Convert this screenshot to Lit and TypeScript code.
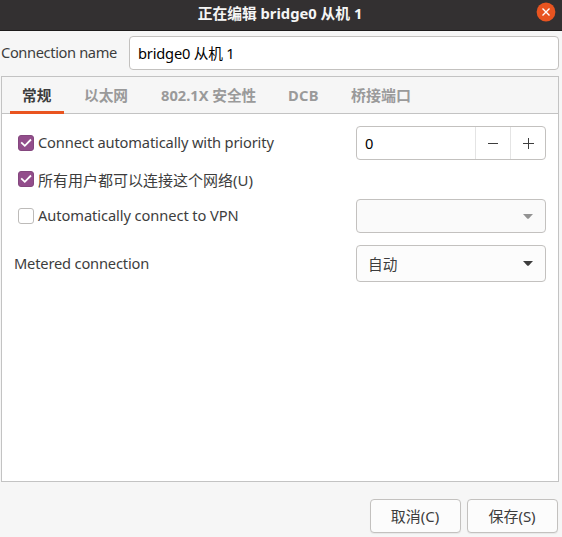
import { LitElement, html, css, svg } from "lit";
import { customElement, property } from "lit/decorators.js";
import { classMap } from "lit/directives/class-map.js";

@customElement("check-row")
class CheckRow extends LitElement {
  @property({ type: Boolean }) checked = false;

  static styles = css`
    :host { display: flex; align-items: flex-start; gap: 4px; }
    .box {
      box-sizing: border-box; width: 16px; height: 16px; flex: none;
      border: 1px solid #bdbbb9; border-radius: 3px; background: #fff;
    }
    .box.on { border-color: #84477e; background: #924d8b; }
    svg { display: block; width: 14px; height: 14px; }
    .label { line-height: var(--label-line, 14px); white-space: nowrap; }
  `;

  render() {
    return html`
      <span class=${classMap({ box: true, on: this.checked })}>
        ${this.checked
          ? html`<svg viewBox="0 0 14 14">${svg`<path d="M2.2 6.3 L5.8 9.8 L12 3.5" fill="none" stroke="#fff" stroke-width="1.8"/>`}</svg>`
          : ""}
      </span>
      <span class="label"><slot></slot></span>
    `;
  }
}

@customElement("combo-box")
class ComboBox extends LitElement {
  @property({ type: Boolean, reflect: true }) disabled = false;

  static styles = css`
    :host {
      box-sizing: border-box; display: flex; align-items: center;
      justify-content: space-between; padding: 0 12px 0 11px;
      border: 1px solid #c3c1bf; border-radius: 4px; background: #fcfcfc;
      color: #3d3d3d;
    }
    :host([disabled]) { background: #fafafa; color: #929292; }
    svg { display: block; width: 10px; height: 5px; }
  `;

  render() {
    return html`<span><slot></slot></span>
      <svg viewBox="0 0 10 5"><path d="M0 0 H10 L5.6 4.7 H4.4 Z" fill="currentColor" /></svg>`;
  }
}

@customElement("app-root")
class AppRoot extends LitElement {
  private tabs = [
    { label: "常规", cls: "general" },
    { label: "以太网", cls: "ethernet" },
    { label: "802.1X 安全性", cls: "security" },
    { label: "DCB", cls: "dcb" },
    { label: "桥接端口", cls: "port" },
  ];

  static styles = css`
    :host {
      display: flex; flex-direction: column; box-sizing: border-box;
      width: 562px; height: 537px; overflow: hidden; background: #f6f6f6;
      color: #3d3d3d;
      font: 14.67px/20px "Noto Sans", "Noto Sans CJK SC", sans-serif;
      white-space: nowrap;
    }
    * { box-sizing: border-box; }
    .titlebar {
      display: grid; grid-template-columns: 35px 1fr 37px; align-items: start;
      height: 31px; flex: none; background: #333031; border-bottom: 1px solid #1d1b1b;
    }
    .title {
      grid-column: 2; padding-top: 3px; text-align: center; color: #f5f5f5;
      font-weight: 700; font-size: 14.75px; line-height: 20px;
    }
    .close { width: 20px; height: 20px; margin-top: 2px; margin-left: 11px; }
    .name-row { display: flex; align-items: center; margin: 5px 3px 6px 1px; height: 34px; flex: none; }
    .name-label { width: 128px; letter-spacing: -0.38px; line-height: 18px; padding-bottom: 3px; }
    .entry {
      flex: 1; height: 34px; padding: 0 8px; border: 1px solid #c3c1bf;
      border-radius: 4px; background: #fff; color: #000; line-height: 33px;
      letter-spacing: -0.2px;
    }
    .notebook {
      display: flex; flex-direction: column; height: 406px; flex: none;
      margin: 0 3px 0 1px; border: 1px solid #c3c3c3; background: #fff;
    }
    .tabs {
      display: flex; height: 37px; flex: none; padding-left: 8px;
      background: #f6f6f6; box-shadow: inset 0 -1px #c3c3c3;
    }
    .tab { padding: 0 12px; margin-right: 8px; line-height: 37px; font-weight: 700; color: #9a9a9a; }
    .tab.active { color: #3d3d3d; border-bottom: 3px solid #e95420; }
    .general { width: 54px; }
    .ethernet { width: 69px; }
    .security { width: 119px; }
    .dcb { width: 55px; letter-spacing: 0.25px; }
    .port { font-size: 15px; }
    .page {
      display: grid; grid-template-columns: 1fr 190px; padding: 12px 12px 0;
      grid-template-rows: 34px 39px 34px 12px 37px;
    }
    .page check-row { margin-left: 4px; }
    .page .r1 { margin-top: 9px; letter-spacing: -0.15px; }
    .page .r2 { grid-row: 2; margin-top: 11px; font-size: 15px; --label-line: 18px; }
    .page .r3 { grid-row: 3; margin-top: 9px; letter-spacing: -0.08px; }
    .vpn { grid-row: 3; grid-column: 2; }
    .metered { grid-row: 5; line-height: 37px; letter-spacing: -0.18px; }
    .mode { grid-row: 5; grid-column: 2; }
    .spin {
      display: grid; grid-template-columns: 1fr 35px 35px; align-items: center;
      border: 1px solid #c3c1bf; border-radius: 4px; color: #000; background: #fff;
    }
    .value { padding-left: 8px; }
    .step {
      display: grid; place-items: center; height: 32px;
      border-left: 1px solid #e4e4e4; color: #3d3d3d;
    }
    .step svg { display: block; width: 12px; height: 12px; }
    .actions { display: flex; justify-content: flex-end; gap: 6px; padding: 17px 4px 0 0; }
    .button {
      width: 91px; height: 34px; border: 1px solid #c3c1bf; border-radius: 4px;
      background: #fcfcfc; text-align: center; line-height: 33px; font-size: 15px;
      padding-right: 1px; box-shadow: 0 1px 1px rgba(0, 0, 0, 0.06);
    }
  `;

  render() {
    return html`
      <header class="titlebar">
        <div class="title">正在编辑 bridge0 从机 1</div>
        <svg class="close" viewBox="0 0 20 20">
          <circle cx="10" cy="10" r="9.4" fill="#e95420" />
          <path d="M6.5 6.5 L13.5 13.5 M13.5 6.5 L6.5 13.5" stroke="#fff" stroke-width="1.4" />
        </svg>
      </header>
      <div class="name-row">
        <div class="name-label">Connection name</div>
        <div class="entry">bridge0 从机 1</div>
      </div>
      <section class="notebook">
        <nav class="tabs">
          ${this.tabs.map((t, i) => html`<div class="tab ${t.cls} ${i === 0 ? "active" : ""}">${t.label}</div>`)}
        </nav>
        <div class="page">
          <check-row class="r1" checked>Connect automatically with priority</check-row>
          <div class="spin">
            <span class="value">0</span>
            <span class="step"><svg viewBox="0 0 12 12"><path d="M1 6.5 H11" stroke="currentColor" /></svg></span>
            <span class="step"><svg viewBox="0 0 12 12"><path d="M1 6.5 H12 M6.5 1 V12" stroke="currentColor" /></svg></span>
          </div>
          <check-row class="r2" checked>所有用户都可以连接这个网络(U)</check-row>
          <check-row class="r3">Automatically connect to VPN</check-row>
          <combo-box class="vpn" disabled></combo-box>
          <div class="metered">Metered connection</div>
          <combo-box class="mode">自动</combo-box>
        </div>
      </section>
      <footer class="actions">
        <div class="button">取消(C)</div>
        <div class="button">保存(S)</div>
      </footer>
    `;
  }
}
